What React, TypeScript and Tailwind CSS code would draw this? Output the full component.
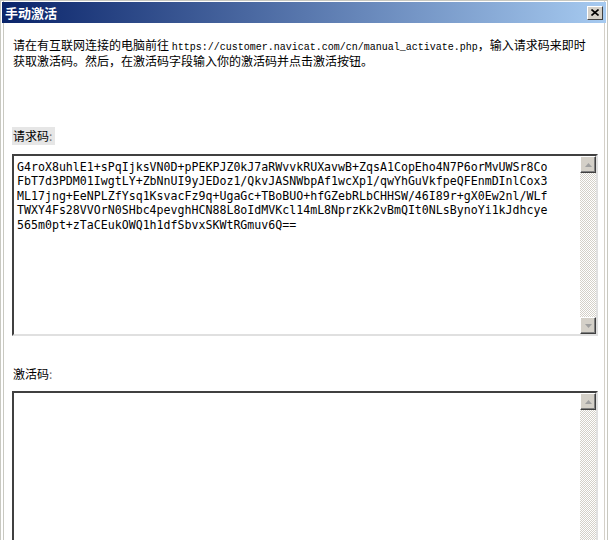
import React from "react";

const lines = [
  "G4roX8uhlE1+sPqIjksVN0D+pPEKPJZ0kJ7aRWvvkRUXavwB+ZqsA1CopEho4N7P6orMvUWSr8Co",
  "FbT7d3PDM01IwgtLY+ZbNnUI9yJEDoz1/QkvJASNWbpAf1wcXp1/qwYhGuVkfpeQFEnmDInlCox3",
  "ML17jng+EeNPLZfYsq1KsvacFz9q+UgaGc+TBoBUO+hfGZebRLbCHHSW/46I89r+gX0Ew2nl/WLf",
  "TWXY4Fs28VVOrN0SHbc4pevghHCN88L8oIdMVKcl14mL8NprzKk2vBmQIt0NLsBynoYi1kJdhcye",
  "565m0pt+zTaCEukOWQ1h1dfSbvxSKWtRGmuv6Q==",
];

function Arrow({ up }: { up: boolean }) {
  return (
    <div className="flex h-[17px] w-[16px] items-center justify-center border border-t-white border-l-white border-r-[#404040] border-b-[#404040] bg-[#d4d0c8] shadow-[inset_-1px_-1px_#808080]">
      <svg width="7" height="4" viewBox="0 0 7 4">
        {up ? (
          <polygon points="3.5,0 7,4 0,4" fill="#a0a0a0" />
        ) : (
          <polygon points="0,0 7,0 3.5,4" fill="#a0a0a0" />
        )}
      </svg>
    </div>
  );
}

function ScrollBar({ showDown }: { showDown: boolean }) {
  return (
    <div className="flex h-full w-[16px] flex-col">
      <Arrow up />
      <div className="flex-1 bg-[repeating-conic-gradient(#d4d0c8_0_25%,#ffffff_0_50%)] bg-[length:2px_2px]" />
      {showDown && <Arrow up={false} />}
    </div>
  );
}

export default function App() {
  return (
    <div className="h-[540px] w-[610px] overflow-hidden bg-white font-['Noto_Sans_CJK_SC',sans-serif] text-[12px] text-black">
      <div className="h-[560px] w-[608px] border-l border-r border-t border-[#c8c8c0] bg-white shadow-[inset_2px_0_#ffffff,inset_3px_0_#c8c8c0,inset_-2px_0_#ffffff,inset_-3px_0_#d4d0c8] pt-[1px]">
        {/* title bar */}
        <div className="mx-[1px] flex h-[21px] items-center justify-between bg-[linear-gradient(to_right,#0a246a,#a6caf0)] pl-[3px] pr-[3px]">
          <span className="text-[13px] font-bold leading-none text-white">手动激活</span>
          <div className="flex h-[14px] w-[16px] items-center justify-center border border-t-white border-l-white border-r-[#404040] border-b-[#404040] bg-[#d4d0c8]">
            <svg width="8" height="7" viewBox="0 0 8 7">
              <path d="M0.5 0.5 L7.5 6.5 M7.5 0.5 L0.5 6.5" stroke="#000" strokeWidth="1.6" />
            </svg>
          </div>
        </div>

        <div className="pl-[11px] pr-[9px]">
          <p className="mt-[15px] pl-[1px] text-[12px] leading-[13px] whitespace-nowrap">
            请在有互联网连接的电脑前往{" "}
            <span className="font-['Liberation_Mono',monospace] text-[10px]">
              https://customer.navicat.com/cn/manual_activate.php
            </span>
            ，输入请求码来即时
            <br />
            获取激活码。然后，在激活码字段输入你的激活码并点击激活按钮。
          </p>

          <div className="mt-[60px] inline-block bg-[#e6e6e6] py-[2px] pl-[1px] pr-[3px] leading-[14px]">
            请求码<span className="text-[#777]">:</span>
          </div>

          <div className="mt-[9px] flex h-[182px] w-[586px] border-2 border-t-[#404040] border-l-[#404040] border-r-[#e0e0e0] border-b-[#e0e0e0] bg-white">
            <div className="flex-1 pl-[3px] pt-[4px] font-['DejaVu_Sans_Mono',monospace] text-[11.6px] leading-[14.4px] whitespace-pre">
              {lines.map((l) => (
                <div key={l}>{l}</div>
              ))}
            </div>
            <ScrollBar showDown />
          </div>

          <div className="mt-[31px] pl-[1px] leading-[14px]">
            激活码<span className="text-[#777]">:</span>
          </div>

          <div className="mt-[10px] flex h-[182px] w-[586px] border-2 border-t-[#404040] border-l-[#404040] border-r-[#e0e0e0] border-b-[#e0e0e0] bg-white">
            <div className="flex-1" />
            <ScrollBar showDown={false} />
          </div>
        </div>
      </div>
    </div>
  );
}
